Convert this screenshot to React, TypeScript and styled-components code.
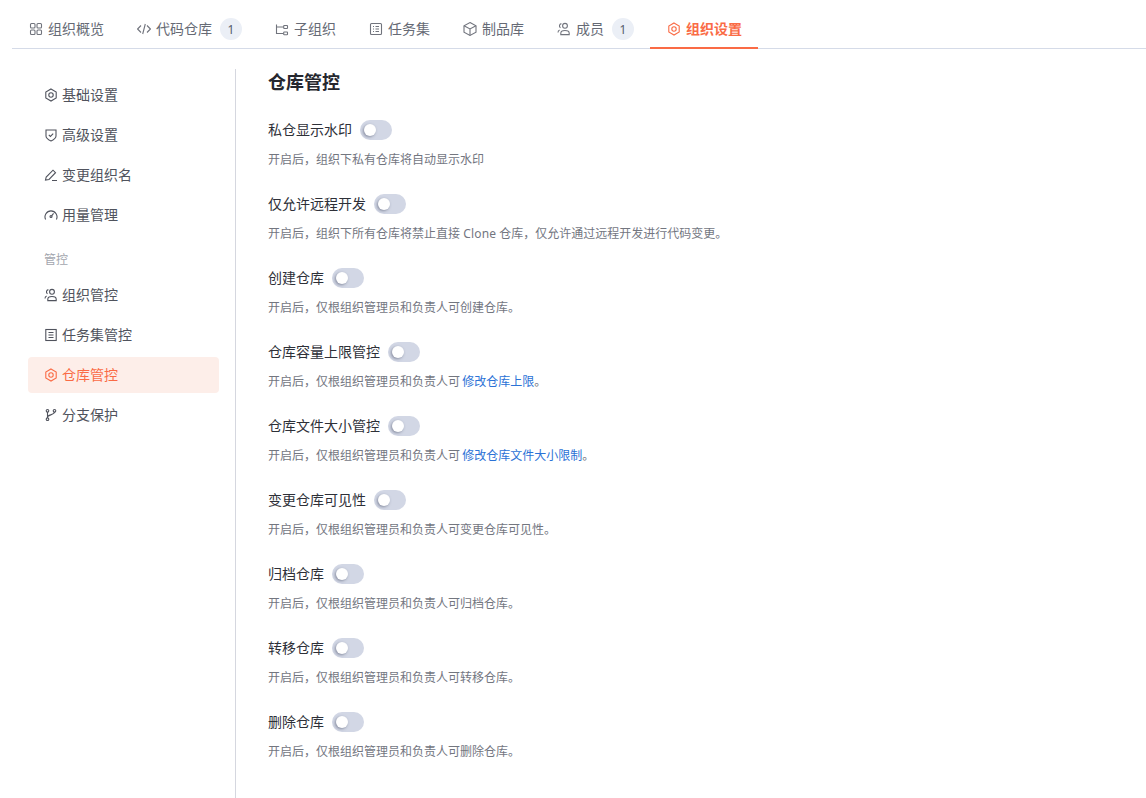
import { ReactNode } from "react";
import styled, { createGlobalStyle } from "styled-components";

const GlobalStyle = createGlobalStyle`
  html, body {
    margin: 0;
    padding: 0;
    background: #fff;
    font-family: "Noto Sans", "Noto Sans CJK SC", sans-serif;
  }
  * { box-sizing: border-box; }
`;

const Page = styled.div`
  width: 1146px;
  height: 798px;
  overflow: hidden;
`;

const TabBar = styled.div`
  display: flex;
  align-items: stretch;
  height: 49px;
  margin-left: 12px;
  border-bottom: 1px solid #d5dbe8;
`;

const Tab = styled.div<{ $active?: boolean }>`
  flex: none;
  display: flex;
  align-items: center;
  gap: 4px;
  height: 49px;
  padding: 11px 16px 0;
  font-size: 14px;
  color: ${(p) => (p.$active ? "#fa6b45" : "#666a75")};
  font-weight: ${(p) => (p.$active ? 700 : 400)};
  border-bottom: 2px solid ${(p) => (p.$active ? "#fa6b45" : "transparent")};
`;

const TabText = styled.span`
  line-height: 20px;
  margin-top: -1px;
`;

const TabIcon = styled.span<{ $active?: boolean }>`
  width: 16px;
  display: flex;
  justify-content: center;
  color: ${(p) => (p.$active ? "#fa6b45" : "#71747d")};
`;

const Badge = styled.span`
  width: 22px;
  height: 22px;
  margin-left: 4px;
  border-radius: 50%;
  background: #ebeff6;
  color: #555b6b;
  font-size: 12px;
  display: flex;
  align-items: center;
  justify-content: center;
`;

const Body = styled.div`
  display: flex;
  padding-top: 20px;
`;

const Side = styled.aside`
  width: 236px;
  height: 729px;
  flex: none;
  padding: 8px 16px 0 28px;
  border-right: 1px solid #d5d7df;
`;

const SideItem = styled.div<{ $active?: boolean }>`
  height: 36px;
  margin-bottom: 4px;
  padding-left: 16px;
  display: flex;
  align-items: center;
  gap: 4px;
  border-radius: 4px;
  font-size: 14px;
  color: ${(p) => (p.$active ? "#fa6b45" : "#50535d")};
  background: ${(p) => (p.$active ? "#fdeee9" : "transparent")};
`;

const SideText = styled.span`
  line-height: 20px;
  margin-top: -1px;
`;

const SideLabel = styled.div`
  height: 40px;
  padding: 4px 0 0 16px;
  display: flex;
  align-items: center;
  font-size: 12px;
  color: #a3a6ae;
`;

const Main = styled.main`
  padding-left: 32px;
  flex: 1;
`;

const Title = styled.h2`
  margin: -1px 0 24px;
  height: 28px;
  line-height: 28px;
  font-size: 18px;
  font-weight: 700;
  color: #25272e;
`;

const Setting = styled.section`
  height: 74px;
`;

const SettingHead = styled.div`
  display: flex;
  align-items: center;
  gap: 8px;
  height: 20px;
  font-size: 14px;
  color: #2e3038;
`;

const HeadText = styled.span`
  line-height: 20px;
  margin-top: -1px;
`;

const Toggle = styled.span`
  position: relative;
  width: 32px;
  height: 20px;
  border-radius: 10px;
  background: #d2d7e5;

  &::after {
    content: "";
    position: absolute;
    left: 4px;
    top: 4px;
    width: 12px;
    height: 12px;
    border-radius: 50%;
    background: #fff;
    box-shadow: -1px 1px 3px rgba(60, 65, 90, 0.5);
  }
`;

const Desc = styled.p`
  margin: 11px 0 0;
  height: 18px;
  line-height: 18px;
  font-size: 12px;
  color: #73767f;
`;

const DocLink = styled.a`
  margin-left: -1px;
  color: #2b72d6;
`;

const Latin = styled.span`
  letter-spacing: 0.2px;
`;

const Svg = styled.svg`
  width: 14px;
  height: 14px;
  flex: none;
  fill: none;
  stroke: currentColor;
  stroke-width: 1.1;
`;

const icons: Record<string, ReactNode> = {
  grid: (
    <>
      <rect x="1.5" y="1.5" width="4.5" height="4.5" rx="1" />
      <rect x="8" y="1.5" width="4.5" height="4.5" rx="1" />
      <rect x="1.5" y="8" width="4.5" height="4.5" rx="1" />
      <rect x="8" y="8" width="4.5" height="4.5" rx="1" />
    </>
  ),
  code: <path d="M4 3.5.6 7 4 10.5M10 3.5 13.4 7 10 10.5M8.3 2 5.7 12" />,
  tree: (
    <>
      <path d="M1.5 2.5v9h7M1.5 5h7" />
      <rect x="8.7" y="3.5" width="3.8" height="3" rx=".6" />
      <rect x="8.7" y="10" width="3.8" height="2.8" rx=".6" />
    </>
  ),
  list: (
    <>
      <rect x="1.5" y="1.5" width="11" height="11" rx="1" />
      <path d="M4 4.5h1M6.5 4.5h3.5M4 7h1M6.5 7h3.5M4 9.5h1M6.5 9.5h3.5" />
    </>
  ),
  box: (
    <>
      <path d="M7 .6 13 3.8v6.4L7 13.4 1 10.2V3.8z" />
      <path d="M1 3.8 7 7l6-3.2M7 7v6.4" />
    </>
  ),
  users: (
    <>
      <circle cx="8" cy="3.8" r="2.4" />
      <path d="M3.8 12.6v-1.4c0-1.6 1.6-2.7 4.2-2.7s4.2 1.1 4.2 2.7v1.4z" />
      <path d="M4.4 1.6a2.3 2.3 0 0 0-.9 4.2M1 10.6c0-1.1.5-2 1.6-2.5" />
    </>
  ),
  hex: (
    <>
      <path d="M7 1 12.2 4v6L7 13 1.8 10V4z" />
      <circle cx="7" cy="7" r="2.2" />
    </>
  ),
  shield: (
    <>
      <path d="M2 2h10v6c0 2.5-2.5 3.8-5 5-2.5-1.2-5-2.5-5-5z" />
      <path d="m4.8 6.8 1.6 1.6 2.8-2.8" />
    </>
  ),
  pen: <path d="M1.5 12 2.2 9 9 2.2l2.5 2.5L5 11.5zM8 12.5h5" />,
  gauge: (
    <>
      <path d="M1.6 11.5a6 6 0 1 1 10.8 0" />
      <circle cx="7" cy="8.5" r="1" />
      <path d="m7.6 7.8 2-2.4" />
    </>
  ),
  task: (
    <>
      <rect x="1.8" y="1.5" width="10.4" height="11" />
      <path d="M4.5 4.5h5M4.5 7h5M4.5 9.5h5" />
    </>
  ),
  branch: (
    <>
      <circle cx="3.5" cy="2.8" r="1.3" />
      <circle cx="3.5" cy="11.2" r="1.3" />
      <circle cx="10.5" cy="2.8" r="1.3" />
      <path d="M3.5 4.1v5.8M10.5 4.1c0 3-7 2.5-7 5" />
    </>
  ),
};

const Icon = ({ name }: { name: string }) => (
  <Svg viewBox="0 0 14 14">{icons[name]}</Svg>
);

const tabs = [
  { label: "组织概览", icon: "grid" },
  { label: "代码仓库", icon: "code", badge: 1 },
  { label: "子组织", icon: "tree" },
  { label: "任务集", icon: "list" },
  { label: "制品库", icon: "box" },
  { label: "成员", icon: "users", badge: 1 },
  { label: "组织设置", icon: "hex", active: true },
];

const sideTop = [
  { label: "基础设置", icon: "hex" },
  { label: "高级设置", icon: "shield" },
  { label: "变更组织名", icon: "pen" },
  { label: "用量管理", icon: "gauge" },
];

const sideBottom = [
  { label: "组织管控", icon: "users" },
  { label: "任务集管控", icon: "task" },
  { label: "仓库管控", icon: "hex", active: true },
  { label: "分支保护", icon: "branch" },
];

const settings: { title: string; desc: ReactNode }[] = [
  { title: "私仓显示水印", desc: "开启后，组织下私有仓库将自动显示水印" },
  {
    title: "仅允许远程开发",
    desc: (
      <>
        开启后，组织下所有仓库将禁止直接 <Latin>Clone</Latin> 仓库，仅允许通过远程开发进行代码变更。
      </>
    ),
  },
  { title: "创建仓库", desc: "开启后，仅根组织管理员和负责人可创建仓库。" },
  {
    title: "仓库容量上限管控",
    desc: (
      <>
        开启后，仅根组织管理员和负责人可 <DocLink>修改仓库上限</DocLink>。
      </>
    ),
  },
  {
    title: "仓库文件大小管控",
    desc: (
      <>
        开启后，仅根组织管理员和负责人可 <DocLink>修改仓库文件大小限制</DocLink>。
      </>
    ),
  },
  { title: "变更仓库可见性", desc: "开启后，仅根组织管理员和负责人可变更仓库可见性。" },
  { title: "归档仓库", desc: "开启后，仅根组织管理员和负责人可归档仓库。" },
  { title: "转移仓库", desc: "开启后，仅根组织管理员和负责人可转移仓库。" },
  { title: "删除仓库", desc: "开启后，仅根组织管理员和负责人可删除仓库。" },
];

const App = () => (
  <Page>
    <GlobalStyle />
    <TabBar>
      {tabs.map((t) => (
        <Tab key={t.label} $active={t.active}>
          <TabIcon $active={t.active}>
            <Icon name={t.icon} />
          </TabIcon>
          <TabText>{t.label}</TabText>
          {t.badge && <Badge>{t.badge}</Badge>}
        </Tab>
      ))}
    </TabBar>
    <Body>
      <Side>
        {sideTop.map((s) => (
          <SideItem key={s.label}>
            <Icon name={s.icon} />
            <SideText>{s.label}</SideText>
          </SideItem>
        ))}
        <SideLabel>管控</SideLabel>
        {sideBottom.map((s) => (
          <SideItem key={s.label} $active={s.active}>
            <Icon name={s.icon} />
            <SideText>{s.label}</SideText>
          </SideItem>
        ))}
      </Side>
      <Main>
        <Title>仓库管控</Title>
        {settings.map((s) => (
          <Setting key={s.title}>
            <SettingHead>
              <HeadText>{s.title}</HeadText>
              <Toggle />
            </SettingHead>
            <Desc>{s.desc}</Desc>
          </Setting>
        ))}
      </Main>
    </Body>
  </Page>
);

export default App;
